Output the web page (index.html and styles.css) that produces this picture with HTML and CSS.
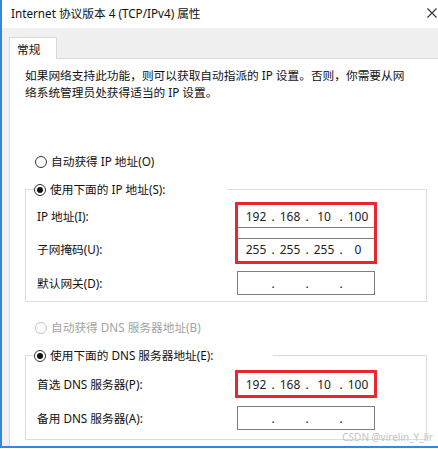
FILE: index.html
```html
<!DOCTYPE html>
<html lang="zh-CN">
<head>
    <meta charset="UTF-8">
    <meta name="viewport" content="width=device-width, initial-scale=1.0">
    <title>Internet 协议版本 4 (TCP/IPv4) 属性</title>
    <link rel="stylesheet" href="styles.css">
</head>
<body>
    <div class="dialog">
        <div class="titlebar">
            <span class="title">Internet 协议版本 4 (TCP/IPv4) 属性</span>
            <svg class="close" width="10" height="10" viewBox="0 0 10 10">
                <path d="M0.5 0.5 L9.5 9.5 M9.5 0.5 L0.5 9.5" stroke="#333" stroke-width="1.1" fill="none"/>
            </svg>
        </div>

        <div class="frame">
            <div class="tabs">
                <div class="tab">常规</div>
            </div>

            <div class="panel">
                <p class="intro">如果网络支持此功能，则可以获取自动指派的 IP 设置。否则，你需要从网<br>络系统管理员处获得适当的 IP 设置。</p>

                <div class="radio first"><span class="dot"></span>自动获得 IP 地址(O)</div>

                <fieldset class="group">
                    <legend class="radio checked legend-ip"><span class="dot"></span>使用下面的 IP 地址(S):</legend>
                    <div class="rows">
                        <span class="label r1">IP 地址(I):</span>
                        <div class="ip r1">
                            <span class="oct">192</span><span class="sep">.</span><span class="oct">168</span><span class="sep">.</span><span class="oct">10</span><span class="sep">.</span><span class="oct">100</span>
                        </div>
                        <span class="label r2">子网掩码(U):</span>
                        <div class="ip r2">
                            <span class="oct">255</span><span class="sep">.</span><span class="oct">255</span><span class="sep">.</span><span class="oct">255</span><span class="sep">.</span><span class="oct">0</span>
                        </div>
                        <span class="label r3">默认网关(D):</span>
                        <div class="ip r3">
                            <span class="oct"></span><span class="sep">.</span><span class="oct"></span><span class="sep">.</span><span class="oct"></span><span class="sep">.</span><span class="oct"></span>
                        </div>
                        <div class="mark span-two"></div>
                    </div>
                </fieldset>

                <div class="radio disabled dns-auto"><span class="dot"></span>自动获得 DNS 服务器地址(B)</div>

                <fieldset class="group dns">
                    <legend class="radio checked legend-dns"><span class="dot"></span>使用下面的 DNS 服务器地址(E):</legend>
                    <div class="rows">
                        <span class="label r1">首选 DNS 服务器(P):</span>
                        <div class="ip r1">
                            <span class="oct">192</span><span class="sep">.</span><span class="oct">168</span><span class="sep">.</span><span class="oct">10</span><span class="sep">.</span><span class="oct">100</span>
                        </div>
                        <span class="label r2">备用 DNS 服务器(A):</span>
                        <div class="ip r2">
                            <span class="oct"></span><span class="sep">.</span><span class="oct"></span><span class="sep">.</span><span class="oct"></span><span class="sep">.</span><span class="oct"></span>
                        </div>
                        <div class="mark span-one"></div>
                    </div>
                </fieldset>
            </div>
        </div>

        <span class="watermark">CSDN @virelin_Y_lir</span>
    </div>
</body>
</html>
```

FILE: styles.css
```css
body {
    margin: 0;
    background: #fff;
    font-family: "Noto Sans", "Noto Sans CJK SC", sans-serif;
    font-size: 11.7px;
    color: #111;
}

.dialog {
    position: relative;
    height: 446px;
    border-left: 2px solid #3a86d6;
    border-bottom: 2px solid #3a86d6;
    display: flex;
    flex-direction: column;
    overflow: hidden;
}

.titlebar {
    height: 28px;
    flex-shrink: 0;
    display: flex;
    align-items: center;
    justify-content: space-between;
    padding: 0 1px 2px 9px;
    box-sizing: border-box;
    background: #fff;
}

.title {
    line-height: 17px;
}

.frame {
    flex: 1;
    background: #f0f0f0;
    padding-left: 7px;
    display: flex;
    flex-direction: column;
}

.tabs {
    padding-top: 9px;
    display: flex;
}

.tab {
    height: 22px;
    width: 48px;
    box-sizing: border-box;
    padding: 3px 0 0 7px;
    line-height: 17px;
    background: #fff;
    border: 1px solid #d9d9d9;
    border-bottom: none;
    margin-bottom: -1px;
    position: relative;
    z-index: 1;
}

.panel {
    flex: 1;
    background: #fff;
    border-top: 1px solid #d9d9d9;
    border-left: 1px solid #d9d9d9;
    padding-left: 15px;
}

.intro {
    margin: 0;
    padding-top: 8px;
    line-height: 17px;
}

/* radio buttons */
.radio {
    display: flex;
    align-items: center;
    gap: 4px;
    line-height: 17px;
    margin-left: 10px;
}

.first {
    margin-top: 52px;
}

.dot {
    width: 12px;
    height: 12px;
    box-sizing: border-box;
    border: 1px solid #333;
    border-radius: 50%;
    background: #fff;
    display: flex;
    align-items: center;
    justify-content: center;
    flex-shrink: 0;
}

.checked .dot::after {
    content: '';
    width: 6px;
    height: 6px;
    border-radius: 50%;
    background: #111;
}

.disabled {
    color: #a3a3a3;
}

.disabled .dot {
    border-color: #c4c4c4;
}

.dns-auto {
    margin-top: 17px;
}

/* group boxes */
.group {
    width: 402px;
    box-sizing: border-box;
    margin: 11px 0 0 0;
    padding: 6px 51px 6px 8px;
    border: 1px solid #dcdcdc;
}

.group.dns {
    margin-top: 11px;
    padding-top: 8px;
    padding-bottom: 9px;
}

.group legend {
    padding: 0;
    margin-left: 0;
}

.legend-ip {
    width: 194px;
    background: #fff;
}

.legend-dns {
    width: 239px;
    background: #fff;
}

.rows {
    display: grid;
    grid-template-columns: 1fr 138px;
    grid-auto-rows: 24px;
    row-gap: 10px;
    align-items: center;
    margin-left: 3px;
}

.group:not(.dns) .rows {
    row-gap: 9.5px;
}

.r1 { grid-row: 1; }
.r2 { grid-row: 2; }
.r3 { grid-row: 3; }

.label {
    grid-column: 1;
    line-height: 17px;
}

.ip {
    grid-column: 2;
    height: 24px;
    box-sizing: border-box;
    border: 1px solid #7f7f7f;
    background: #fff;
    display: flex;
    align-items: center;
    padding: 0 3px 0 5px;
    font-family: "Noto Sans", sans-serif;
    font-size: 12px;
    color: #222;
}

.oct {
    width: 26px;
    text-align: center;
}

.sep {
    width: 8px;
    text-align: center;
}

/* red highlight drawn over the edited fields */
.mark {
    grid-column: 2;
    align-self: stretch;
    margin: -2px;
    border: 3px solid #e8262e;
    pointer-events: none;
}

.span-two {
    grid-row: 1 / span 2;
}

.span-one {
    grid-row: 1 / span 1;
}

.watermark {
    position: absolute;
    right: 5px;
    bottom: 2px;
    font-family: "Noto Sans", sans-serif;
    font-size: 10px;
    color: #c4c4c4;
}
```
